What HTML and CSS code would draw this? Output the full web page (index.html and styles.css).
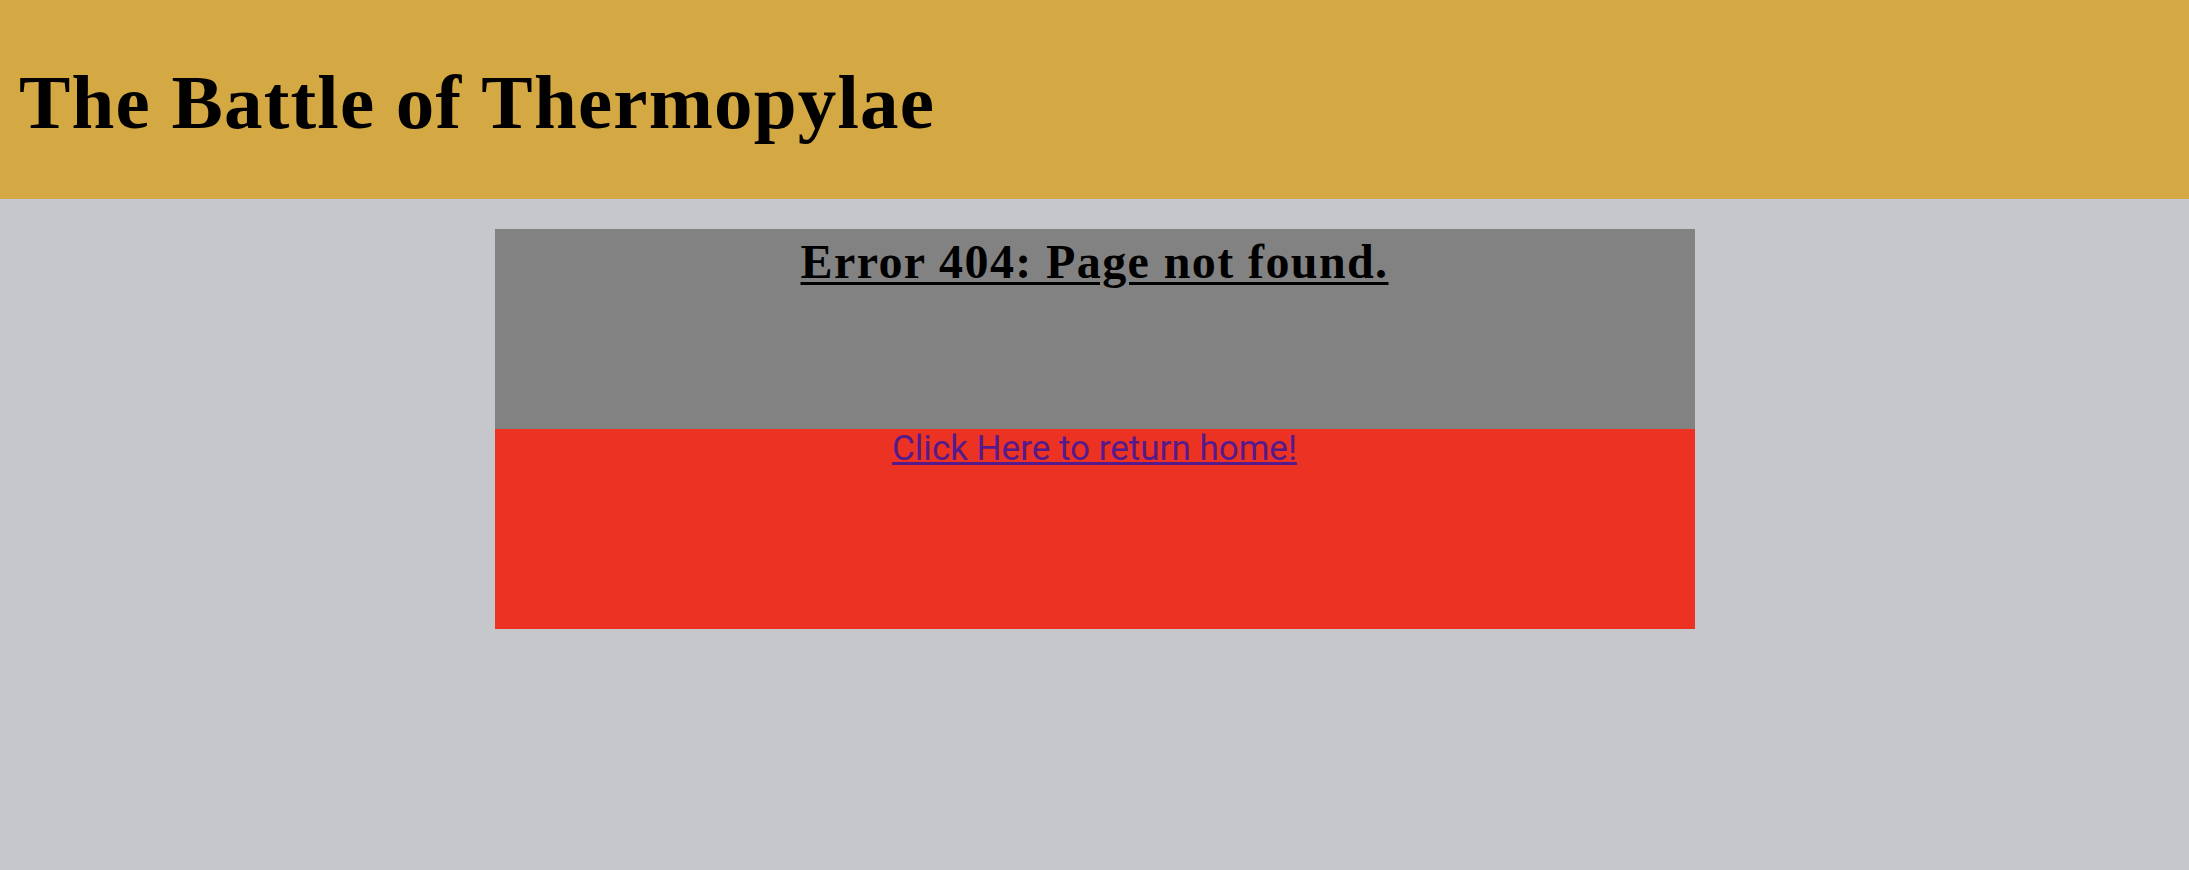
FILE: index.html
```html
<!DOCTYPE html>
<html lang="en">
<head>
<meta charset="utf-8">
<title>The Battle of Thermopylae - 404</title>
<link rel="stylesheet" href="styles.css">
</head>
<body>
<header class="site-header">
  <h1 class="site-title">The Battle of Thermopylae</h1>
</header>
<main class="page">
  <section class="error-box">
    <div class="error-top">
      <h2 class="error-title">Error 404: Page not found.</h2>
    </div>
    <div class="error-bottom">
      <a class="home-link" href="#">Click Here to return home!</a>
    </div>
  </section>
</main>
</body>
</html>
```

FILE: styles.css
```css
html, body {
  margin: 0;
  padding: 0;
}

body {
  background: #c6c7cb;
  min-height: 870px;
  font-family: "Liberation Serif", "DejaVu Serif", serif;
  color: #000;
}

.site-header {
  background: #d4a843;
  height: 199px;
  box-sizing: border-box;
  padding: 62px 0 0 19px;
}

.site-title {
  margin: 0;
  font-family: "Liberation Serif", "DejaVu Serif", serif;
  font-weight: bold;
  font-size: 77px;
  line-height: 80px;
  letter-spacing: 1.2px;
}

.page {
  display: flex;
  justify-content: center;
  padding-top: 30px;
}

.error-box {
  width: 1200px;
  display: flex;
  flex-direction: column;
}

.error-top {
  background: #828282;
  height: 200px;
  box-sizing: border-box;
  padding-top: 8px;
  text-align: center;
}

.error-title {
  margin: 0;
  font-family: "Liberation Serif", "DejaVu Serif", serif;
  font-weight: bold;
  font-size: 48px;
  line-height: 50px;
  letter-spacing: 1.4px;
  text-decoration: underline;
  text-decoration-thickness: 3px;
  text-underline-offset: 4px;
}

.error-bottom {
  background: #ec3323;
  height: 200px;
  text-align: center;
}

.home-link {
  font-family: Roboto, "Liberation Sans", sans-serif;
  font-size: 35px;
  line-height: 39px;
  color: #551a8b;
  text-decoration: underline;
}
```
